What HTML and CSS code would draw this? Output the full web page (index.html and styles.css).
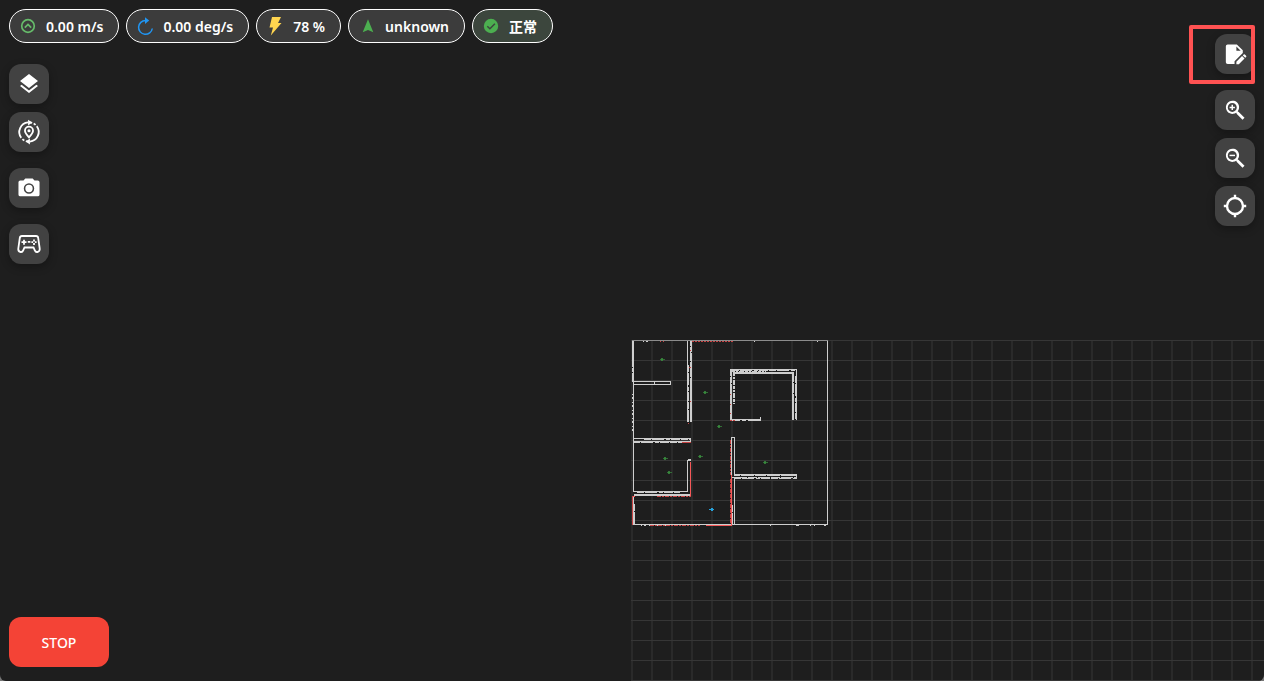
FILE: index.html
```
<!DOCTYPE html>
<html lang="zh">
<head>
<meta charset="utf-8">
<title>Robot map</title>
<link rel="stylesheet" href="styles.css">
</head>
<body>
<main class="stage">
  <svg class="map" aria-label="Map" role="img">
    <defs>
      <pattern id="grid" width="20" height="20" patternUnits="userSpaceOnUse">
        <path fill="#2a2a2a" d="M0 0h2v20h-2z"/>
        <path fill="#363636" d="M0 0h20v1h-20z"/>
      </pattern>
      <g id="pt"><path d="M-2 0h5v1h-5z" opacity=".7"/><path d="M-1-1h2v3h-2z" opacity=".8"/></g>
    </defs>
    <rect width="100%" height="100%" fill="url(#grid)"/>
    <g transform="translate(-631 -340)" shape-rendering="crispEdges" fill="none">
      <path stroke="#8c8c8c" d="M632 340.500H828"/>
      <g stroke="#cecece">
        <path d="M827.500 341V525M633 524.500H828M633.500 382V492M633 381.500H671M633 384.500H671M670.500 381V385M654.500 382V384M687.500 341V422M760.500 417V420M796.500 370V420M792.500 374V420M633 438.500H691M690.500 438V442M633 491.500H688M687.500 460V492M633.500 497V525M731.500 437V478M734.500 437V475M731 437.500H735M734.500 478V524M796.500 474V479M731 477.500H735M730 369.500H797M633 441.500H690"/>
        <path stroke-width="2" d="M633 341V382M691 341V422M731 370V420M793 373V420M733 373H794M731 420H761M688 460H691M634 495H691M734 475H797"/>
        <path stroke-dasharray="7 1 12 2 4 1 9 1" d="M688.500 365V422M732 370.500H796M795.500 376V419M644 439.500H690M633 442.500H690M656 494.500H690M734 478.500H797M634.500 504V524M732.500 505V524M637 492.500H680"/>
        <path stroke-dasharray="12 1 9 1" d="M735 477.500H797"/>
        <path stroke-dasharray="3 1 2 1 5 1" d="M733.500 373V404M734.500 373V404M732 371.500H766"/>
        <path stroke-dasharray="1 2 2 3" d="M632.500 394V434M641 525.500H672M643 341.500H650"/>
        <path d="M754 341.500h1M817 341.500h1M770 525.500h1M796 525.500h3M810 525.500h1M814 525.500h1M824 525.500h2"/>
      </g>
      <path stroke="#1e1e1e" d="M690 346.500h1M691 352.500h1M690 361.500h1M690 377.500h1M730 376.500h1M731 383.500h1M740 420.500h2M746 420.500h2M793 382.500h1M793 393.500h1M632 367.500h1M632 372.500h1M740 475.500h1M754 475.500h1M766 475.500h1M780 475.500h1"/>
      <g stroke="#c94545">
        <path stroke-dasharray="2 1" d="M692 341.500H734"/>
        <path d="M660 341.500h1M663 341.500h1M690 350.500h1M689 367.500h2M690 401.500h1M688 423.500h1M730 394.500h1M730 404.500h1M730 413.500h1M730 420.500h2M733 420.500h2M682 442.500h9M632.500 496V525"/>
        <path stroke-dasharray="4 1 2 1" d="M730.500 440V475M657 496.500H691M650 525.500H700"/>
      </g>
      <path stroke="#f55858" d="M690.500 462V496M731.500 475V525M706 525.500H732M633 496.500h2"/>
      <path stroke="#c94545" stroke-dasharray="4 1" d="M730.500 479V524"/>
      <g fill="#398f3e">
        <use href="#pt" x="662" y="359"/><use href="#pt" x="705" y="392"/><use href="#pt" x="719" y="426"/><use href="#pt" x="665" y="458"/><use href="#pt" x="669" y="472"/><use href="#pt" x="700" y="456"/><use href="#pt" x="765" y="462"/>
      </g>
      <path fill="#27a3dc" d="M709 509h2v-1h2v1h1v1h-1v1h-2v-1h-2z"/>
    </g>
  </svg>

  <div class="overlay">
    <div class="left">
      <div class="status">
        <div class="pill"><svg viewBox="0 0 16 16" fill="none" stroke="#66bb6a" stroke-width="1.700"><circle cx="8" cy="8" r="6.300"/><path d="M4.800 9.600 8 6.500l3.200 3.100"/></svg><span>0.00 m/s</span></div>
        <div class="pill"><svg viewBox="0 0 16 16"><path d="M8.500 2.500A6.900 6.900 0 1 0 15.300 10.500" fill="none" stroke="#2196f3" stroke-width="1.500"/><path d="M8-.800 12.200 2.600 8 6z" fill="#2196f3"/></svg><span>0.00 deg/s</span></div>
        <div class="pill"><svg viewBox="0 0 16 16"><path d="M5-1h9l-3 6h3.500L3.800 17.500 6 9.500H2.500z" fill="#ffd54f"/></svg><span>78 %</span></div>
        <div class="pill"><svg viewBox="0 0 16 16"><path d="M9 1.200 14.300 14.300 9 12 3.700 14.300z" fill="#4caf50"/></svg><span>unknown</span></div>
        <div class="pill pill-ok"><svg viewBox="0 0 16 16"><circle cx="8" cy="8" r="7.200" fill="#4caf50"/><path d="m4.300 8.200 2.600 2.600 5-5" fill="none" stroke="#3c463d" stroke-width="1.500"/></svg><span>正常</span></div>
      </div>
      <nav class="tools">
        <button class="tool tool-large" aria-label="Layers"><svg viewBox="0 0 24 24"><path d="M11.990 18.540 4.620 12.810 3 14.070l9 7 9-7-1.630-1.270zM12 16l7.360-5.730L21 9l-9-7-9 7 1.630 1.270z"/></svg></button>
        <button class="tool" aria-label="Relocate"><svg viewBox="0 0 24 24" fill="none" stroke="#fff" stroke-width="2"><path d="M11 1.500A10.500 10.500 0 0 0 3.500 18.200M13 22.500A10.500 10.500 0 0 0 20.500 5.800"/><path d="M13 1.500A10.500 10.500 0 0 1 20.500 5.800M11 22.500A10.500 10.500 0 0 1 3.500 18.200" stroke-dasharray="2.500 1.800"/><path d="m11-1.500 4.500 3.200-4.500 3.300zM13 25.500l-4.500-3.200 4.500-3.300z" fill="#fff" stroke="none"/><path d="M12 17.800c-2.700-3-4.400-4.900-4.400-7.200a4.400 4.400 0 0 1 8.800 0c0 2.300-1.700 4.200-4.400 7.200z"/><circle cx="12" cy="10.600" r="1.700" fill="#fff" stroke="none"/></svg></button>
        <button class="tool tool-group" aria-label="Camera"><svg viewBox="0 0 24 24"><path fill-rule="evenodd" d="M8 1.500h8l2 2.300h3.500a2 2 0 0 1 2 2V19a2 2 0 0 1-2 2h-19a2 2 0 0 1-2-2V5.800a2 2 0 0 1 2-2H6zM12 6.800a5.700 5.700 0 1 0 0 11.400 5.700 5.700 0 0 0 0-11.400zm0 1.700a4 4 0 1 1 0 8 4 4 0 0 1 0-8z"/></svg></button>
        <button class="tool tool-large tool-group" aria-label="Gamepad"><svg viewBox="0 0 24 24" fill="none" stroke="#fff" stroke-width="1.800"><path d="M5 4h14a2.300 2.300 0 0 1 2.200 2l1.500 10.500c.5 3.700-3.800 4.600-4.900 1.900L16.500 15.500h-9L6.200 18.400C5.100 21.100.8 20.200 1.300 16.500L2.800 6A2.300 2.300 0 0 1 5 4z"/><path d="M4.500 10.200h5M7 7.700v5M10.800 9.800h2.600"/><path d="M17 7.600v1.800M17 11.100v1.800M14.400 10.200h1.700M17.900 10.200h1.700"/></svg></button>
      </nav>
      <button class="stop">STOP</button>
    </div>
    <nav class="right">
      <div class="edit"><button class="tool" aria-label="Edit map"><svg viewBox="0 0 24 24"><path fill-rule="evenodd" d="M4 1.500h10l6.500 6.500v3L11.500 19.800V23H4a2 2 0 0 1-2-2V3.500a2 2 0 0 1 2-2zm9.500 2.300v4.700h4.700z"/><path d="m13.500 20.500 6.200-6.200 2.700 2.700-6.200 6.200h-2.700zM20.500 13.500l.9-.9a1 1 0 0 1 1.400 0l1.300 1.300a1 1 0 0 1 0 1.400l-.9.900z"/></svg></button></div>
      <button class="tool" aria-label="Zoom in"><svg viewBox="0 0 24 24"><path fill-rule="evenodd" d="m15.800 13.900 6.600 6.500-2.200 2.200-6.500-6.600v-.7l-.4-.3A7.200 7.200 0 1 1 15 13.400l.3.500zM9 4.300a4.900 4.900 0 1 0 0 9.800 4.900 4.900 0 0 0 0-9.800z"/><path d="M8.200 6.300h1.600v2.100h2.100V10H9.800v2.100H8.200V10H6.100V8.400h2.100z"/></svg></button>
      <button class="tool" aria-label="Zoom out"><svg viewBox="0 0 24 24"><path fill-rule="evenodd" d="m15.800 13.900 6.600 6.500-2.200 2.200-6.500-6.600v-.7l-.4-.3A7.200 7.200 0 1 1 15 13.400l.3.500zM9 4.300a4.900 4.900 0 1 0 0 9.800 4.900 4.900 0 0 0 0-9.800z"/><path d="M6 8.400h6V10H6z"/></svg></button>
      <button class="tool tool-large" aria-label="Center"><svg viewBox="0 0 24 24" fill="none" stroke="#fff" stroke-width="2.400"><circle cx="12" cy="12" r="8"/><path d="M12 .800v3.500M12 19.700v3.500M.800 12h3.500M19.700 12h3.500"/></svg></button>
    </nav>
  </div>
</main>
</body>
</html>
```
FILE: styles.css
```
* { box-sizing: border-box; }

body {
  margin: 0;
  background: #777;
  font-family: "Noto Sans", "Noto Sans CJK SC", sans-serif;
  font-size: 14px;
  color: #fff;
}

.stage {
  position: relative;
  min-height: 100vh;
  display: flex;
  overflow: hidden;
  background: #1e1e1e;
  border-radius: 0 0 6px 6px;
}

.map {
  position: absolute;
  left: calc(50% - 1px);
  top: 340px;
  width: calc(50% + 1px);
  height: calc(100% - 340px);
}

.overlay {
  position: relative;
  flex: 1;
  display: flex;
  justify-content: space-between;
  padding: 9px 9px 14px;
}

.left {
  display: flex;
  flex-direction: column;
  align-items: flex-start;
}

.status {
  display: flex;
  flex-wrap: wrap;
  gap: 7px;
}

.pill {
  display: flex;
  align-items: center;
  gap: 10px;
  height: 34px;
  padding: 0 15px 0 10px;
  border: 1px solid #fff;
  border-radius: 17px;
  background: #3c3c3c;
  font-weight: 600;
  white-space: nowrap;
}

.pill-ok {
  background: #3c463d;
  font-family: "Noto Sans CJK SC", sans-serif;
  font-weight: 700;
}

.pill svg {
  width: 16px;
  height: 16px;
  overflow: visible;
}

.tools {
  display: flex;
  flex-direction: column;
  gap: 8px;
  margin-top: 21px;
}

.tool {
  display: grid;
  place-items: center;
  width: 40px;
  height: 40px;
  padding: 0;
  border: 0;
  border-radius: 12px;
  background: #424242;
  box-shadow: 0 3px 8px rgba(0, 0, 0, 0.3);
}

.tool svg {
  width: 22px;
  height: 22px;
  fill: #fff;
  overflow: visible;
}

.tool-large svg {
  width: 24px;
  height: 24px;
}

.tool svg[fill="none"] { fill: none; }

.tool-group { margin-top: 8px; }

.stop {
  width: 100px;
  height: 50px;
  margin-top: auto;
  padding: 0;
  border: 0;
  border-radius: 12px;
  background: #f44336;
  color: #fff;
  font: 500 14px "Noto Sans", sans-serif;
}

.right {
  display: flex;
  flex-direction: column;
  align-items: flex-end;
  gap: 8px;
  padding-top: 16px;
}

.edit {
  position: relative;
  display: flex;
  justify-content: flex-end;
  width: 66px;
  height: 59px;
  margin-bottom: -2px;
  padding-top: 9px;
}

.edit::after {
  content: "";
  position: absolute;
  inset: 0;
  border: 4px solid #ff5252;
  border-radius: 2px;
  pointer-events: none;
}
```
